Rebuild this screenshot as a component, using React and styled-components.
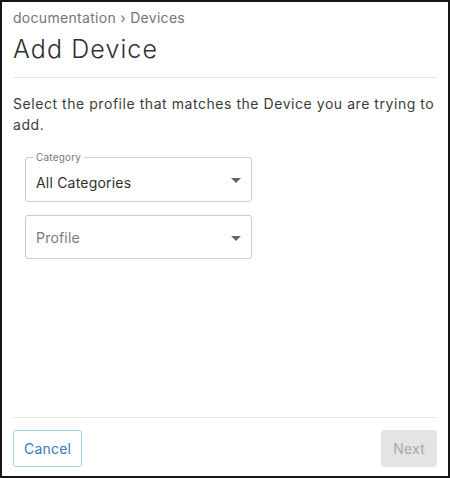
import React from "react";
import styled, { createGlobalStyle } from "styled-components";

const Global = createGlobalStyle`
  html, body { margin: 0; padding: 0; background: #ffffff; }
  body { font-family: Inter, "Noto Sans", sans-serif; }
  * { box-sizing: border-box; }
`;

const Frame = styled.div`
  width: 450px;
  height: 478px;
  border: 2px solid #161616;
  background: #fff;
  display: flex;
  flex-direction: column;
  padding: 0 11px 9px 11px;
`;

const Header = styled.header`
  padding-top: 6px;
  border-bottom: 1px solid #e6e6e6;
  padding-bottom: 9px;
`;

const Breadcrumb = styled.div`
  font-size: 14px;
  line-height: 20px;
  color: #757575;
  letter-spacing: 0.3px;
`;

const Title = styled.h1`
  margin: 2px 0 0 0;
  font-size: 25px;
  line-height: 38px;
  font-weight: 300;
  color: #2f2f2f;
  letter-spacing: 1.1px;
`;

const Body = styled.main`
  flex: 1;
  padding-top: 15px;
`;

const Intro = styled.p`
  margin: 0;
  font-size: 14px;
  line-height: 21px;
  color: #3b3b3b;
  letter-spacing: 0.55px;
`;

const Fields = styled.div`
  margin: 22px 0 0 12px;
  width: 227px;
  display: flex;
  flex-direction: column;
  gap: 13px;
`;

const Field = styled.div`
  position: relative;
  height: ${(p) => p.$h}px;
  border: 1px solid #cbcbcb;
  border-radius: 3px;
  display: flex;
  align-items: center;
  padding: ${(p) => (p.$labelled ? "5px" : "1px")} 10px 0 10px;
`;

const FloatLabel = styled.span`
  position: absolute;
  top: -7px;
  left: 7px;
  padding: 0 3px;
  background: #fff;
  font-size: 10px;
  line-height: 12px;
  color: #777;
  letter-spacing: 0.2px;
`;

const Value = styled.span`
  flex: 1;
  font-size: 14px;
  letter-spacing: 0.2px;
  color: ${(p) => (p.$placeholder ? "#7a7a7a" : "#2f2f2f")};
`;

const Caret = styled.svg`
  width: 10px;
  height: 5px;
  flex: none;
  margin-top: ${(p) => (p.$labelled ? "-4px" : "2px")};
`;

const Footer = styled.footer`
  border-top: 1px solid #e6e6e6;
  padding-top: 12px;
  display: flex;
  justify-content: space-between;
`;

const Button = styled.button`
  height: 37px;
  padding: 0 ${(p) => p.$px}px;
  border-radius: 3px;
  font-family: Inter, "Noto Sans", sans-serif;
  font-size: 14px;
  letter-spacing: 0.2px;
  cursor: ${(p) => (p.$disabled ? "default" : "pointer")};
  background: ${(p) => (p.$disabled ? "#e4e4e4" : "#fff")};
  color: ${(p) => (p.$disabled ? "#a9a9a9" : "#2f7cb8")};
  border: 1px solid ${(p) => (p.$disabled ? "#e4e4e4" : "#a7cfea")};
`;

function CaretIcon({ labelled }) {
  return (
    <Caret $labelled={labelled} viewBox="0 0 10 5">
      <path d="M0 0 L10 0 L5 5 Z" fill="#666" />
    </Caret>
  );
}

export default function App() {
  return (
    <>
      <Global />
      <Frame>
        <Header>
          <Breadcrumb>documentation › Devices</Breadcrumb>
          <Title>Add Device</Title>
        </Header>
        <Body>
          <Intro>Select the profile that matches the Device you are trying to add.</Intro>
          <Fields>
            <Field $h={45} $labelled>
              <FloatLabel>Category</FloatLabel>
              <Value>All Categories</Value>
              <CaretIcon labelled />
            </Field>
            <Field $h={44}>
              <Value $placeholder>Profile</Value>
              <CaretIcon />
            </Field>
          </Fields>
        </Body>
        <Footer>
          <Button $px={10}>Cancel</Button>
          <Button $px={11} $disabled>Next</Button>
        </Footer>
      </Frame>
    </>
  );
}
